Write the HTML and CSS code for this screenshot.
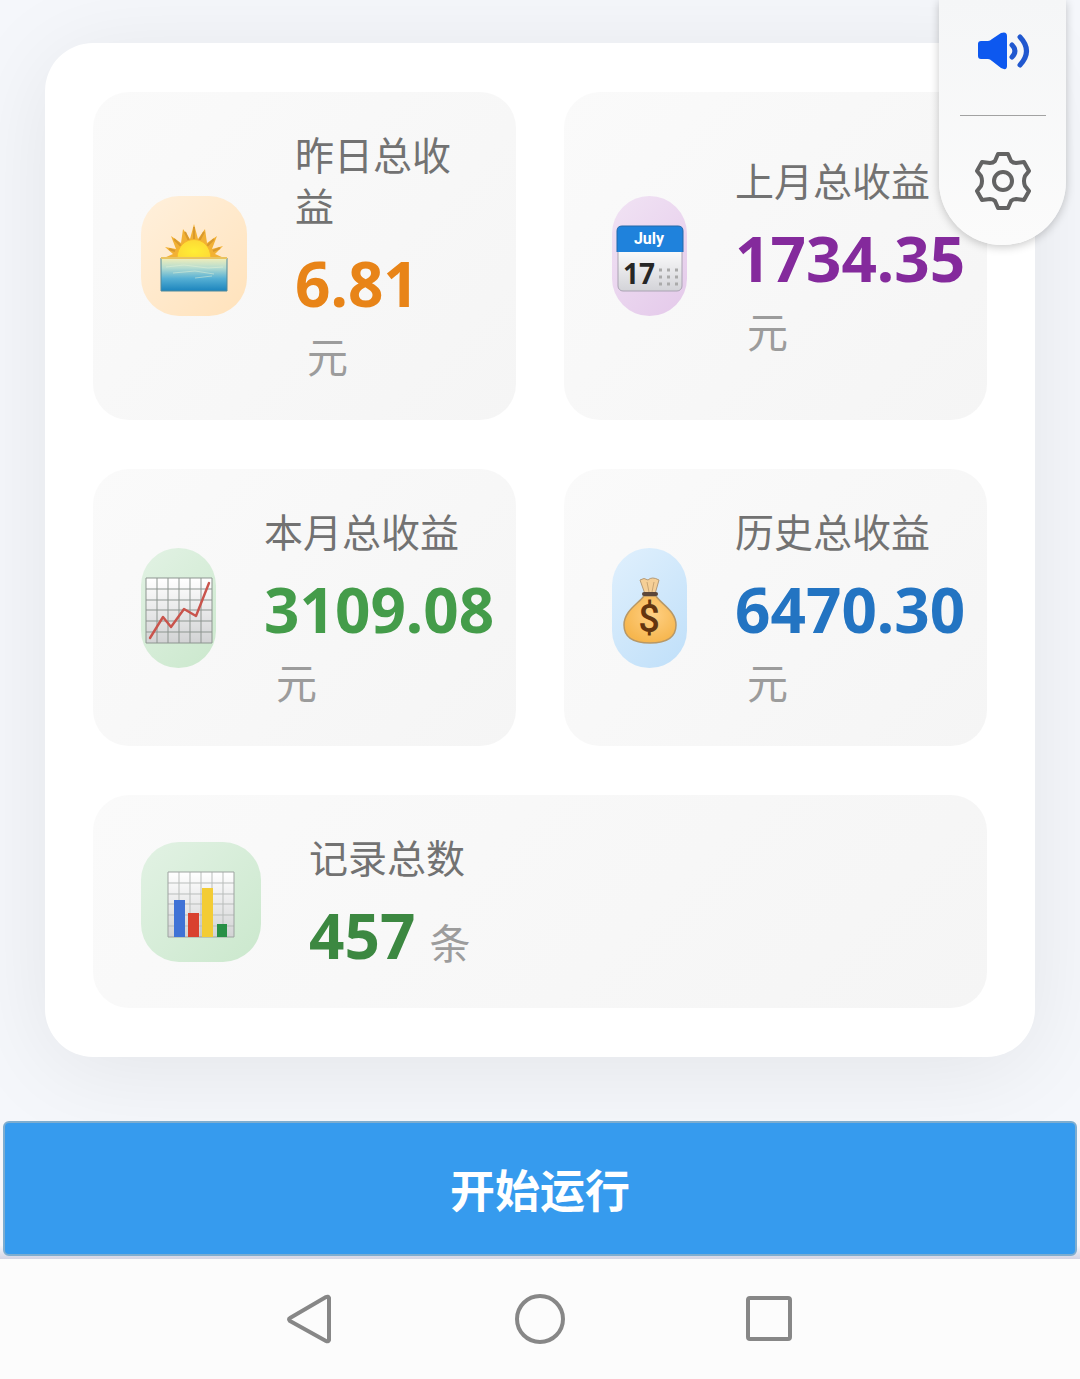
FILE: index.html
```html
<!DOCTYPE html>
<html lang="zh-CN">
<head>
<meta charset="utf-8">
<meta name="viewport" content="width=device-width, initial-scale=1">
<title>收益统计</title>
<link rel="stylesheet" href="styles.css">
</head>
<body>
<main class="page">
  <section class="panel">
    <article class="card">
      <div class="icon icon-medium icon-orange">
        <svg class="emoji" viewBox="0 0 68 68" aria-hidden="true">
          <defs>
            <linearGradient id="sea" x1="0" y1="0" x2="0" y2="1"><stop offset="0" stop-color="#f3eeb8"/><stop offset=".3" stop-color="#b5dcd0"/><stop offset=".62" stop-color="#56b0d4"/><stop offset="1" stop-color="#1b84bd"/></linearGradient>
            <radialGradient id="sun" cx=".5" cy=".6" r=".6"><stop offset="0" stop-color="#ffee35"/><stop offset="1" stop-color="#fdd835"/></radialGradient>
          </defs>
          <path d="M4 34 13 30 5 23 16 25 11 12 21 19 23 5 30 15 34 0 38 15 45 5 47 19 57 12 52 25 63 22 55 30 64 34Z" fill="#f2b134"/>
          <path d="M9 25 15 27M14 15 21 22M25 8 29 17M34 3V16M44 8 39 17M54 15 47 22M60 24 53 27" stroke="#d9992c" stroke-width="2"/>
          <path d="M17 35C17 9 51 9 51 35Z" fill="url(#sun)" stroke="#f7b52b" stroke-width="1"/>
          <path d="M1 34H67V67H1Z" fill="url(#sea)" stroke="#51899b" stroke-width="1"/>
          <path d="M1 34H67" stroke="#e9c35f" stroke-width="2"/>
          <path d="M6 43 24 41 48 44 63 43M13 49 35 47 54 50M35 54 52 52" fill="none" stroke="#e4f2d8" stroke-width="1" opacity=".5"/>
        </svg>
      </div>
      <div class="info">
        <div class="label">昨日总收益</div>
        <div class="value value-stacked"><strong class="number orange">6.81</strong><span class="unit">元</span></div>
      </div>
    </article>

    <article class="card">
      <div class="icon icon-narrow icon-purple">
        <svg class="emoji" viewBox="0 0 68 68" aria-hidden="true">
          <defs><linearGradient id="paper" x1="0" y1="0" x2="0" y2="1"><stop offset=".3" stop-color="#ffffff"/><stop offset="1" stop-color="#d3d3d8"/></linearGradient></defs>
          <rect x="2" y="3" width="64" height="64" rx="5" fill="url(#paper)" stroke="#aaa3b3"/>
          <path d="M1 28V7Q1 2 6 2H62Q67 2 67 7V28Z" fill="#1f82dc"/>
          <path d="M1 28V7Q1 2 6 2H62Q67 2 67 7V28" fill="none" stroke="#2468a8" stroke-width="1"/>
          <text class="month" x="33" y="20" text-anchor="middle">July</text>
          <text class="day" x="7" y="60">17</text>
          <path d="M43 46H64M43 53H64M43 60H64" stroke="#aaa" stroke-width="3" stroke-dasharray="3 5"/>
        </svg>
      </div>
      <div class="info">
        <div class="label">上月总收益</div>
        <div class="value value-stacked"><strong class="number purple">1734.35</strong><span class="unit">元</span></div>
      </div>
    </article>

    <article class="card">
      <div class="icon icon-narrow icon-green">
        <svg class="emoji" viewBox="0 0 68 68" aria-hidden="true">
          <defs><linearGradient id="sheet" x1="0" y1="0" x2="0" y2="1"><stop offset="0" stop-color="#ffffff"/><stop offset="1" stop-color="#d2d3d4"/></linearGradient></defs>
          <path d="M1 2H67V67H1Z" fill="url(#sheet)"/>
          <path d="M1 2V67M12 2V67M23 2V67M34 2V67M45 2V67M56 2V67M67 2V67M1 2H67M1 13H67M1 24H67M1 34H67M1 45H67M1 56H67M1 67H67" stroke="#8d9590" stroke-width="1"/>
          <path d="M5 62 18 41 26 51 39 33 51 40 64 7" fill="none" stroke="#c9544c" stroke-width="2.4" stroke-linecap="round" stroke-linejoin="round"/>
        </svg>
      </div>
      <div class="info">
        <div class="label">本月总收益</div>
        <div class="value value-stacked"><strong class="number green">3109.08</strong><span class="unit">元</span></div>
      </div>
    </article>

    <article class="card">
      <div class="icon icon-narrow icon-blue">
        <svg class="emoji" viewBox="0 0 68 68" aria-hidden="true">
          <defs><radialGradient id="bag" cx=".55" cy=".4" r=".6"><stop offset="0" stop-color="#ffd083"/><stop offset="1" stop-color="#f6b64e"/></radialGradient></defs>
          <path d="M29 18 24 4Q28 1 32 4Q36 0 43 4L39 18Z" fill="#f5cf96" stroke="#b59b78" stroke-width="1"/>
          <path d="M31 6 33 16M38 6 36 16" stroke="#c9a574" stroke-width="1"/>
          <path d="M28 20C22 28 8 35 8 49C8 63 20 67 34 67S60 63 60 49C60 35 45 28 40 20Z" fill="url(#bag)" stroke="#b79867" stroke-width="1.5"/>
          <path d="M28 18H40" stroke="#5c4739" stroke-width="4" stroke-linecap="round"/>
          <text class="dollar" x="33" y="56" text-anchor="middle">$</text>
        </svg>
      </div>
      <div class="info">
        <div class="label">历史总收益</div>
        <div class="value value-stacked"><strong class="number blue">6470.30</strong><span class="unit">元</span></div>
      </div>
    </article>

    <article class="card card-wide">
      <div class="icon icon-full icon-green">
        <svg class="emoji" viewBox="0 0 68 68" aria-hidden="true">
          <path d="M1 2H67V67H1Z" fill="url(#sheet)"/>
          <path d="M12 2V67M23 2V67M34 2V67M45 2V67M56 2V67M1 13H67M1 24H67M1 34H67M1 45H67M1 56H67" stroke="#b9bdbb" stroke-width="1"/>
          <path d="M1 2H67V67H1Z" fill="none" stroke="#9da3a0" stroke-width="1"/>
          <path d="M7 30H18V67H7Z" fill="#3f72d6"/>
          <path d="M21 43H32V67H21Z" fill="#d9412f"/>
          <path d="M35 18H46V67H35Z" fill="#f3cc35"/>
          <path d="M50 54H60V67H50Z" fill="#289046"/>
        </svg>
      </div>
      <div class="info">
        <div class="label">记录总数</div>
        <div class="value"><strong class="number dark-green">457</strong><span class="unit">条</span></div>
      </div>
    </article>
  </section>
</main>

<div class="run-bar"><button class="run" type="button">开始运行</button></div>

<nav class="system-nav" aria-label="系统导航">
  <button class="nav-button" type="button" aria-label="返回"><svg viewBox="0 0 50 50"><path d="M44 4Q43 2 41 3L5 24Q3 25 5 27L41 47Q43 48 44 46Z"/></svg></button>
  <button class="nav-button" type="button" aria-label="主页"><svg viewBox="0 0 50 50"><circle cx="25" cy="25" r="23"/></svg></button>
  <button class="nav-button" type="button" aria-label="最近任务"><svg viewBox="0 0 50 50"><rect x="3" y="4" width="42" height="41" rx="2"/></svg></button>
</nav>

<aside class="floating">
  <button class="float-button" type="button" aria-label="声音">
    <svg class="speaker" viewBox="0 0 56 44"><path d="M6 12H13Q15 12 17 10L26 4Q32 2 32 7V37Q32 42 26 39L17 32Q15 30 13 30H6Q3 30 3 27V15Q3 12 6 12Z" fill="#0d58ef"/><path d="M37 16Q43 22 37 28M45 8Q58 22 45 36" fill="none" stroke="#2158cf" stroke-width="5" stroke-linecap="round"/></svg>
  </button>
  <hr class="divider">
  <button class="float-button float-settings" type="button" aria-label="设置">
    <svg class="gear" viewBox="0 0 60 60"><path d="M25 3H35L38 10Q40 12 43 12L51 11 56 20 52 25Q50 30 52 35L56 40 51 49 43 48Q40 48 38 50L35 57H25L22 50Q20 48 17 48L9 49 4 40 8 35Q10 30 8 25L4 20 9 11 17 12Q20 12 22 10Z"/><circle cx="30" cy="30" r="9"/></svg>
  </button>
</aside>
</body>
</html>
```
FILE: styles.css
```css
* {
  box-sizing: border-box;
}

body {
  position: relative;
  display: flex;
  flex-direction: column;
  min-height: 100vh;
  margin: 0;
  background: #fcfcfc;
  font-family: "Noto Sans", "Noto Sans CJK SC", sans-serif;
}

button {
  margin: 0;
  padding: 0;
  border: 0;
  background: none;
  font-family: inherit;
}

svg {
  display: block;
}

.page {
  padding: 43px 45px 64px;
  overflow: hidden;
  background: #f5f7fb;
}

.panel {
  display: grid;
  grid-template-columns: repeat(2, minmax(0, 1fr));
  gap: 49px 48px;
  padding: 49px 48px;
  border-radius: 48px;
  background: #ffffff;
  box-shadow: 0 12px 96px rgba(0, 0, 0, 0.08);
}

.card {
  display: flex;
  align-items: center;
  gap: 48px;
  padding: 37px 48px;
  border-radius: 36px;
  background: linear-gradient(135deg, #fafafa, #f5f5f5);
}

.card-wide {
  grid-column: 1 / -1;
}

.icon {
  display: flex;
  flex: none;
  align-items: center;
  justify-content: center;
  height: 120px;
  padding-top: 4px;
  border-radius: 38px;
}

.icon-narrow {
  width: 75px;
}

.icon-medium {
  width: 106px;
}

.icon-full {
  width: 120px;
}

.icon-orange {
  background: linear-gradient(135deg, #fff0dc, #ffe2bb);
}

.icon-purple {
  background: linear-gradient(135deg, #f1e3f4, #e4c9ea);
}

.icon-green {
  background: linear-gradient(135deg, #e2f2e4, #cbe8cd);
}

.icon-blue {
  background: linear-gradient(135deg, #e0f0fd, #bfdff9);
}

.emoji {
  flex: none;
  width: 68px;
  height: 68px;
}

.month {
  fill: #ffffff;
  font: bold 16px Roboto, sans-serif;
}

.day {
  fill: #262626;
  font: bold 28px "Noto Sans", sans-serif;
}

.dollar {
  fill: #63350f;
  font: 500 38px Roboto, sans-serif;
}

.info {
  display: flex;
  flex: 1;
  flex-direction: column;
  gap: 16px;
  min-width: 0;
}

.label {
  color: #727272;
  font-size: 39px;
  line-height: 51px;
}

.value {
  display: flex;
  align-items: baseline;
  gap: 14px;
  white-space: nowrap;
}

.value-stacked {
  flex-direction: column;
  gap: 12px;
}

.number {
  font-size: 62px;
  font-weight: 700;
  line-height: 72px;
}

.unit {
  color: #9c9c9c;
  font-size: 41px;
  line-height: 52px;
}

.value-stacked .unit {
  padding-left: 12px;
}

.orange {
  color: #e88418;
}

.purple {
  color: #842a9c;
}

.green {
  color: #449c4a;
}

.blue {
  color: #2374c2;
}

.dark-green {
  color: #3c8841;
}

.run-bar {
  padding: 0 3px 3px;
  background: linear-gradient(#f5f7fb 90%, #d4d4e4);
}

.run {
  display: block;
  width: 100%;
  height: 135px;
  border: 2px solid #7eadcf;
  border-radius: 6px;
  background: #369bee;
  color: #ffffff;
  font-size: 45px;
  font-weight: 700;
}

.system-nav {
  display: flex;
  flex: 1;
  align-items: center;
  justify-content: center;
  gap: 180px;
  min-height: 120px;
}

.nav-button {
  width: 50px;
  height: 50px;
}

.nav-button svg {
  fill: none;
  stroke: #878787;
  stroke-width: 4;
  stroke-linejoin: round;
}

.floating {
  position: absolute;
  top: 0;
  right: 14px;
  display: flex;
  flex-direction: column;
  align-items: center;
  width: 127px;
  padding-bottom: 32px;
  border-radius: 0 0 64px 64px;
  background: linear-gradient(#f5f6f7, #fbfbfb);
  box-shadow: 0 2px 10px rgba(0, 0, 0, 0.22);
}

.float-button {
  display: flex;
  align-items: center;
  justify-content: center;
  width: 86px;
  height: 97px;
}

.float-button:first-child {
  height: 115px;
  padding-bottom: 14px;
}

.speaker {
  width: 56px;
  height: 44px;
}

.divider {
  width: 86px;
  height: 1px;
  margin: 0;
  border: 0;
  background: #a2a2a2;
}

.float-settings {
  padding-top: 32px;
}

.gear {
  width: 60px;
  height: 60px;
  fill: none;
  stroke: #636363;
  stroke-width: 4;
  stroke-linejoin: round;
}
```
